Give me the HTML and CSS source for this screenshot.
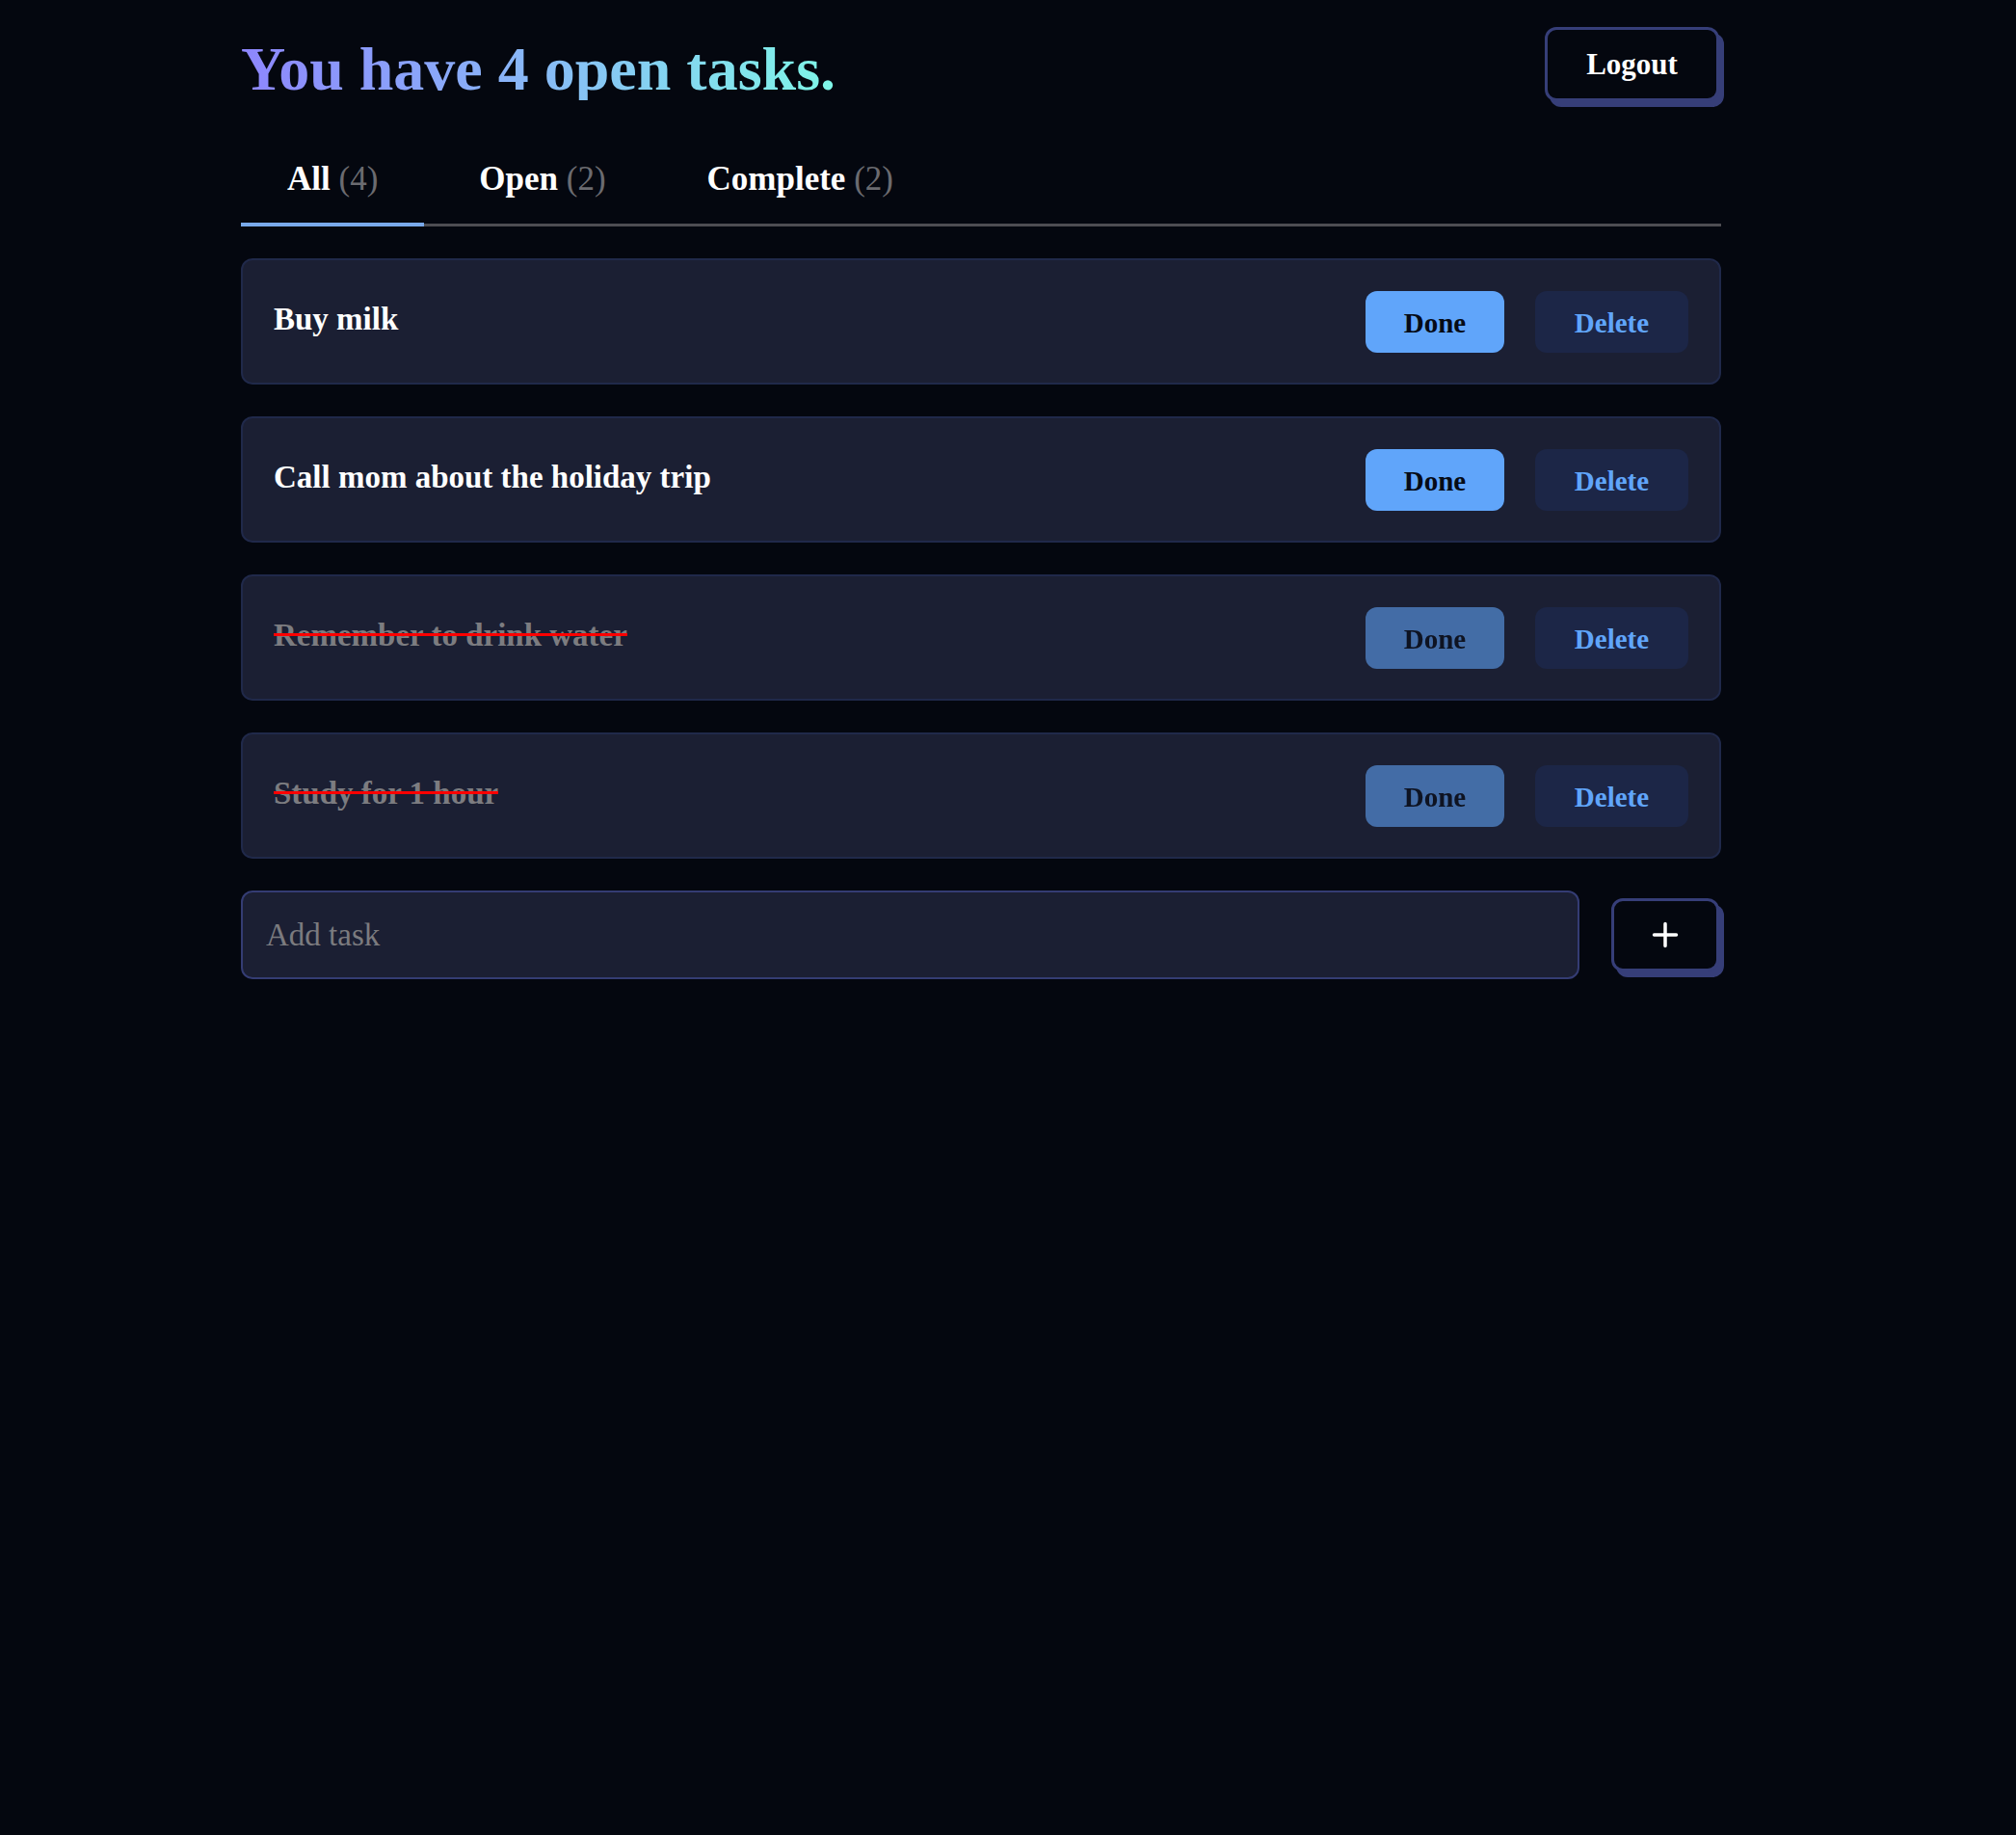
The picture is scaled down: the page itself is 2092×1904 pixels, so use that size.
FILE: index.html
```html
<!DOCTYPE html>
<html lang="en">
<head>
<meta charset="utf-8">
<title>Tasks</title>
<link rel="stylesheet" href="styles.css">
</head>
<body>
<div class="app">
  <header class="header">
    <h1 class="title">You have 4 open tasks.</h1>
    <button class="btn-outline logout">Logout</button>
  </header>

  <nav class="tabs">
    <div class="tab active">All <span class="count">(4)</span></div>
    <div class="tab">Open <span class="count">(2)</span></div>
    <div class="tab">Complete <span class="count">(2)</span></div>
  </nav>

  <ul class="tasks">
    <li class="task">
      <span class="task-text">Buy milk</span>
      <div class="actions">
        <button class="btn-done">Done</button>
        <button class="btn-delete">Delete</button>
      </div>
    </li>
    <li class="task">
      <span class="task-text">Call mom about the holiday trip</span>
      <div class="actions">
        <button class="btn-done">Done</button>
        <button class="btn-delete">Delete</button>
      </div>
    </li>
    <li class="task completed">
      <span class="task-text">Remember to drink water</span>
      <div class="actions">
        <button class="btn-done">Done</button>
        <button class="btn-delete">Delete</button>
      </div>
    </li>
    <li class="task completed">
      <span class="task-text">Study for 1 hour</span>
      <div class="actions">
        <button class="btn-done">Done</button>
        <button class="btn-delete">Delete</button>
      </div>
    </li>
  </ul>

  <form class="add-row">
    <input class="add-input" type="text" placeholder="Add task">
    <button class="btn-outline add-btn" type="button" aria-label="Add">
      <svg width="28" height="28" viewBox="0 0 28 28" fill="none" stroke="#ffffff" stroke-width="3.5" stroke-linecap="round">
        <path d="M14 2.5v23M2.5 14h23"/>
      </svg>
    </button>
  </form>
</div>
</body>
</html>
```

FILE: styles.css
```css
* {
  box-sizing: border-box;
}

html, body {
  margin: 0;
  padding: 0;
  background: #04070f;
  color: #ffffff;
  font-family: "Liberation Serif", "Times New Roman", serif;
}

body {
  min-height: 1904px;
}

.app {
  width: 1536px;
  margin-left: 250px;
  padding-top: 28px;
}

/* Header */
.header {
  display: flex;
  justify-content: space-between;
  align-items: flex-start;
  height: 77px;
}

.title {
  margin: 12px 0 0 0;
  font-size: 64px;
  line-height: 64px;
  font-weight: 700;
  background: linear-gradient(90deg, #8d86fd 0%, #89b4f8 45%, #7ff7e8 100%);
  -webkit-background-clip: text;
  background-clip: text;
  color: transparent;
}

.btn-outline {
  background: #04070f;
  border: 3px solid #363e78;
  border-radius: 12px;
  box-shadow: 5px 6px 0 #363e78;
  color: #ffffff;
  font-family: "Liberation Serif", "Times New Roman", serif;
  font-weight: 700;
  cursor: pointer;
  display: flex;
  align-items: center;
  justify-content: center;
  padding: 0;
}

.logout {
  width: 181px;
  height: 77px;
  font-size: 31px;
  margin-right: 2px;
}

/* Tabs */
.tabs {
  display: flex;
  gap: 9px;
  margin-top: 32px;
  border-bottom: 3px solid #4d4d52;
}

.tab {
  position: relative;
  padding: 29px 48px 26px 48px;
  font-size: 35px;
  line-height: 40px;
  font-weight: 700;
  color: #ffffff;
  white-space: nowrap;
}

.tab .count {
  font-weight: 400;
  color: #6b6b70;
}

.tab.active::after {
  content: "";
  position: absolute;
  left: 0;
  right: 0;
  bottom: -3px;
  height: 4px;
  background: #79a9ea;
}

/* Tasks */
.tasks {
  list-style: none;
  margin: 33px 0 0 0;
  padding: 0;
  display: flex;
  flex-direction: column;
  gap: 33px;
}

.task {
  display: flex;
  align-items: center;
  justify-content: space-between;
  height: 131px;
  padding: 0 32px;
  background: #1b1f33;
  border: 2px solid #20294a;
  border-radius: 12px;
}

.task-text {
  position: relative;
  font-size: 33px;
  line-height: 40px;
  font-weight: 700;
  color: #ffffff;
  margin-bottom: 5px;
}

.task.completed .task-text {
  color: #7c7c80;
}

.task.completed .task-text::after {
  content: "";
  position: absolute;
  left: 0;
  right: 0;
  top: 18px;
  height: 3px;
  background: #ff0000;
}

.actions {
  display: flex;
  gap: 32px;
}

.btn-done,
.btn-delete {
  height: 64px;
  border: none;
  border-radius: 12px;
  font-family: "Liberation Serif", "Times New Roman", serif;
  font-size: 29px;
  font-weight: 700;
  padding: 3px 0 0 0;
  cursor: pointer;
}

.btn-done {
  width: 144px;
  background: #60a5fa;
  color: #060b16;
}

.task.completed .btn-done {
  opacity: 0.58;
}

.btn-delete {
  width: 159px;
  background: #1c2647;
  color: #60a5fa;
}

/* Add row */
.add-row {
  display: flex;
  align-items: center;
  gap: 33px;
  margin-top: 33px;
}

.add-input {
  flex: 1;
  height: 92px;
  background: #1b1f33;
  border: 2px solid #343c73;
  border-radius: 12px;
  padding: 0 24px;
  font-family: "Liberation Serif", "Times New Roman", serif;
  font-size: 33px;
  color: #ffffff;
  outline: none;
}

.add-input::placeholder {
  color: #7b7b7f;
}

.add-btn {
  width: 112px;
  height: 76px;
  margin-right: 2px;
}
```
